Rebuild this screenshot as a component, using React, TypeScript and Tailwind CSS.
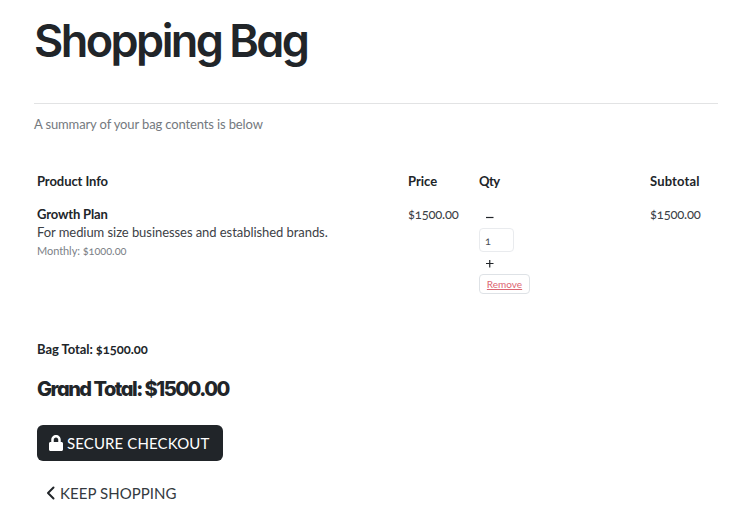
import { FaLock } from "react-icons/fa";

function LineItem() {
  return (
    <div className="mt-[15px] flex items-start text-[13px] leading-[18px]">
      <div className="w-[371px]">
        <p className="font-bold tracking-[-0.150px]">Growth Plan</p>
        <p className="tracking-[-0.060px] text-[#3c4146]">For medium size businesses and established brands.</p>
        <p className="mt-px text-[11px] tracking-[-0.060px] text-[#7c8187]">Monthly: $1000.00</p>
      </div>
      <p className="w-[71px] tracking-[-0.200px] text-[#3c4146]">$1500.00</p>
      <div className="mt-px flex w-[171px] flex-col items-start">
        <button className="mt-0.5 ml-1.5 flex h-[18px] w-[9px] items-center justify-center" aria-label="Decrease">
          <svg className="h-[9px] w-[9px]" viewBox="0 0 9 9" fill="none" stroke="#212529" strokeWidth="1.2"><path d="M1 4.500h7.500" /></svg>
        </button>
        <div className="mt-0.5 h-6 w-[35px] rounded-sm border border-[#e9ebee] pl-[5px] text-[11px] leading-[23px] text-[#495057]">1</div>
        <button className="mt-[3px] ml-1.5 flex h-[18px] w-[9px] items-center justify-center" aria-label="Increase">
          <svg className="mb-0.5 h-[9px] w-[9px]" viewBox="0 0 9 9" fill="none" stroke="#212529" strokeWidth="1.2"><path d="M1 4.500h7.500M4.750 1v7.500" /></svg>
        </button>
        <button className="mt-px h-5 w-[51px] rounded-sm border border-[#dee2e6] text-center text-[10px] leading-[19px] text-[#dc6572] underline">Remove</button>
      </div>
      <p className="tracking-[-0.200px] text-[#3c4146]">$1500.00</p>
    </div>
  );
}

export default function App() {
  return (
    <main className="h-[507px] w-[744px] overflow-hidden bg-white pl-[34px] pr-[26px] font-['Lato','Open_Sans',sans-serif] text-[#212529] [font-feature-settings:'onum']">
      <h1 className="h-[103px] pt-[15px] font-['Inter',sans-serif] text-[45px] leading-[52px] font-semibold tracking-[-2.550px] [word-spacing:-1px] [font-feature-settings:'cv11']">Shopping Bag</h1>
      <hr className="border-t border-[#e2e3e4]" />
      <p className="mt-[11px] text-[13px] leading-[18px] tracking-[-0.130px] text-[#74797e]">A summary of your bag contents is below</p>
      <section className="mt-[39px] pl-[3px]">
        <div className="flex text-[13px] leading-[18px] font-bold">
          <span className="w-[371px] tracking-[-0.080px]">Product Info</span>
          <span className="w-[71px]">Price</span>
          <span className="w-[171px] tracking-[-0.500px]">Qty</span>
          <span className="tracking-[0.150px]">Subtotal</span>
        </div>
        <LineItem />
        <p className="mt-[46px] text-[13px] leading-[18px] font-bold tracking-[-0.050px]">Bag Total: $1500.00</p>
        <h2 className="mt-[17px] font-['Inter',sans-serif] text-[20px] leading-[28px] font-extrabold tracking-[-1.500px] [font-feature-settings:'cv11']">Grand Total: $1500.00</h2>
        <button className="mt-[22px] flex h-9 w-[186px] items-center rounded-md bg-[#212529] pl-3 text-[15px] leading-[24px] tracking-[0.120px] text-white">
          <FaLock className="mr-1 h-4 w-3.5" />
          <span className="mb-px">SECURE CHECKOUT</span>
        </button>
        <button className="mt-5 flex h-6 items-center pl-[9px] text-[15px] leading-[24px] tracking-[0.050px]">
          <svg className="mr-[5px] h-[14px] w-[9px]" viewBox="0 0 9 14" fill="none" stroke="currentColor" strokeWidth="2"><path d="M7.500 1.500 2 7l5.500 5.500" strokeLinecap="round" strokeLinejoin="round" /></svg>
          <span className="text-[#343a40]">KEEP SHOPPING</span>
        </button>
      </section>
    </main>
  );
}
